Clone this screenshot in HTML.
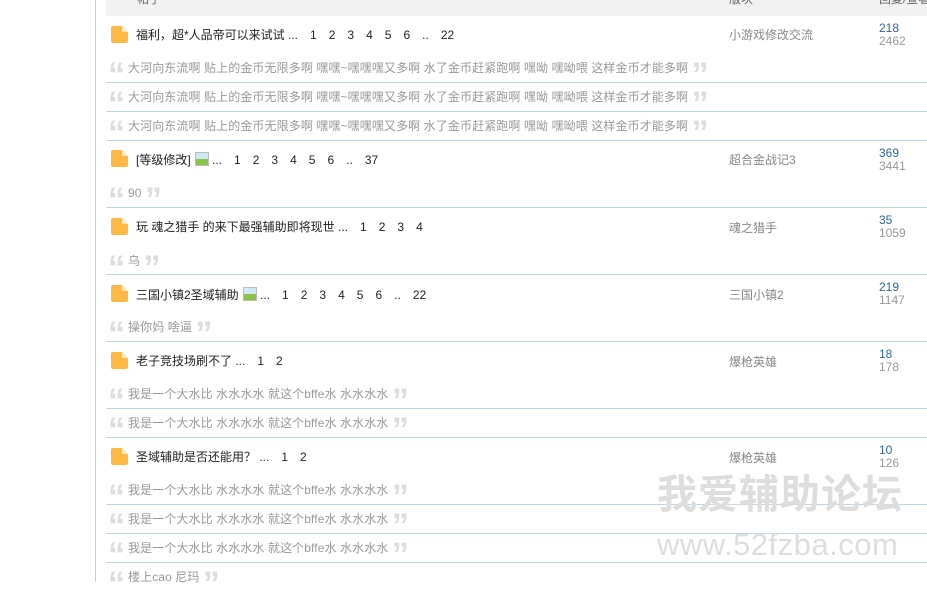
<!DOCTYPE html><html><head><meta charset="utf-8"><style>
body{margin:0;width:927px;height:582px;overflow:hidden;background:#fff;font-family:"Liberation Sans","Noto Sans CJK SC",sans-serif;font-size:12px;position:relative}
.a{position:absolute;white-space:nowrap;line-height:14px}
.vl{position:absolute;left:95px;top:0;width:1px;height:582px;background:#ccc}
.hd{position:absolute;left:106px;top:0;width:821px;height:16px;background:#f2f2f2}
.sep{position:absolute;left:106px;width:821px;height:1px;background:#c2d5e3}
.ic{position:absolute;left:111px;width:17px;height:17px;background:#fdb944;border-radius:2px;clip-path:polygon(0 0,65% 0,100% 35%,100% 100%,0 100%)}
.ic:after{content:"";position:absolute;right:0;top:0;width:6px;height:6px;background:#fee7b8}
.t{left:136px;color:#222}
.t span{margin-left:12px}
.q{left:108px;color:#999;letter-spacing:0.1px}
.q b{font-family:"Liberation Sans",sans-serif;font-size:34px;color:#ddd;font-weight:bold;vertical-align:-14px;letter-spacing:-4px;display:inline-block;width:20px;line-height:14px}
.f{left:729px;color:#888}
.r{left:879px;color:#369;line-height:13px}
.r i{font-style:normal;color:#999;display:block}
.img{display:inline-block;width:12px;height:12px;border:1px solid #bbb;background:linear-gradient(#cfe9f7 50%,#8bc34a 50%);vertical-align:-2px;margin-left:4px}
.wm{position:absolute;color:#ddd;white-space:nowrap}
</style></head><body>
<div class="vl"></div>
<div class="hd"></div>
<div class="a" style="left:137px;top:-8px;color:#666">帖子</div>
<div class="a" style="left:729px;top:-8px;color:#666">版块</div>
<div class="a" style="left:879px;top:-8px;color:#666">回复/查看</div>

<div class="ic" style="top:26px"></div>
<div class="a t" style="top:28px">福利，超*人品帝可以来试试 ...<span>1</span><span>2</span><span>3</span><span>4</span><span>5</span><span>6</span><span>..</span><span>22</span></div>
<div class="a f" style="top:28px">小游戏修改交流</div>
<div class="a r" style="top:22px">218<i>2462</i></div>
<div class="a q" style="top:61px"><b>“</b>大河向东流啊 贴上的金币无限多啊 嘿嘿~嘿嘿嘿又多啊 水了金币赶紧跑啊 嘿呦 嘿呦喂 这样金币才能多啊 <b>”</b></div>
<div class="sep" style="top:82px"></div>
<div class="a q" style="top:90px"><b>“</b>大河向东流啊 贴上的金币无限多啊 嘿嘿~嘿嘿嘿又多啊 水了金币赶紧跑啊 嘿呦 嘿呦喂 这样金币才能多啊 <b>”</b></div>
<div class="sep" style="top:111px"></div>
<div class="a q" style="top:119px"><b>“</b>大河向东流啊 贴上的金币无限多啊 嘿嘿~嘿嘿嘿又多啊 水了金币赶紧跑啊 嘿呦 嘿呦喂 这样金币才能多啊 <b>”</b></div>
<div class="sep" style="top:140px"></div>

<div class="ic" style="top:150px"></div>
<div class="a t" style="top:152px">[等级修改]<span class="img" style="margin-left:4px"></span> ...<span>1</span><span>2</span><span>3</span><span>4</span><span>5</span><span>6</span><span>..</span><span>37</span></div>
<div class="a f" style="top:153px">超合金战记3</div>
<div class="a r" style="top:147px">369<i>3441</i></div>
<div class="a q" style="top:186px"><b>“</b>90 <b>”</b></div>
<div class="sep" style="top:207px"></div>

<div class="ic" style="top:218px"></div>
<div class="a t" style="top:220px">玩 魂之猎手 的来下最强辅助即将现世 ...<span>1</span><span>2</span><span>3</span><span>4</span></div>
<div class="a f" style="top:221px">魂之猎手</div>
<div class="a r" style="top:214px">35<i>1059</i></div>
<div class="a q" style="top:254px"><b>“</b>乌 <b>”</b></div>
<div class="sep" style="top:274px"></div>

<div class="ic" style="top:285px"></div>
<div class="a t" style="top:287px">三国小镇2圣域辅助<span class="img" style="margin-left:4px"></span> ...<span>1</span><span>2</span><span>3</span><span>4</span><span>5</span><span>6</span><span>..</span><span>22</span></div>
<div class="a f" style="top:288px">三国小镇2</div>
<div class="a r" style="top:281px">219<i>1147</i></div>
<div class="a q" style="top:320px"><b>“</b>操你妈 啥逼 <b>”</b></div>
<div class="sep" style="top:341px"></div>

<div class="ic" style="top:352px"></div>
<div class="a t" style="top:354px">老子竞技场刷不了 ...<span>1</span><span>2</span></div>
<div class="a f" style="top:355px">爆枪英雄</div>
<div class="a r" style="top:348px">18<i>178</i></div>
<div class="a q" style="top:387px"><b>“</b>我是一个大水比 水水水水 就这个bffe水 水水水水 <b>”</b></div>
<div class="sep" style="top:408px"></div>
<div class="a q" style="top:416px"><b>“</b>我是一个大水比 水水水水 就这个bffe水 水水水水 <b>”</b></div>
<div class="sep" style="top:437px"></div>

<div class="ic" style="top:448px"></div>
<div class="a t" style="top:450px">圣域辅助是否还能用？ ...<span>1</span><span>2</span></div>
<div class="a f" style="top:451px">爆枪英雄</div>
<div class="a r" style="top:444px">10<i>126</i></div>
<div class="a q" style="top:483px"><b>“</b>我是一个大水比 水水水水 就这个bffe水 水水水水 <b>”</b></div>
<div class="sep" style="top:504px"></div>
<div class="a q" style="top:512px"><b>“</b>我是一个大水比 水水水水 就这个bffe水 水水水水 <b>”</b></div>
<div class="sep" style="top:533px"></div>
<div class="a q" style="top:541px"><b>“</b>我是一个大水比 水水水水 就这个bffe水 水水水水 <b>”</b></div>
<div class="sep" style="top:562px"></div>
<div class="a q" style="top:570px"><b>“</b>楼上cao 尼玛 <b>”</b></div>

<div class="wm" style="left:657px;top:468px;font-size:40px;font-weight:bold;letter-spacing:1px;font-family:'Noto Sans CJK SC',sans-serif;line-height:46px">我爱辅助论坛</div>
<div class="wm" style="left:657px;top:527px;font-size:31px;letter-spacing:0.5px;line-height:36px">www.52fzba.com</div>
</body></html>
